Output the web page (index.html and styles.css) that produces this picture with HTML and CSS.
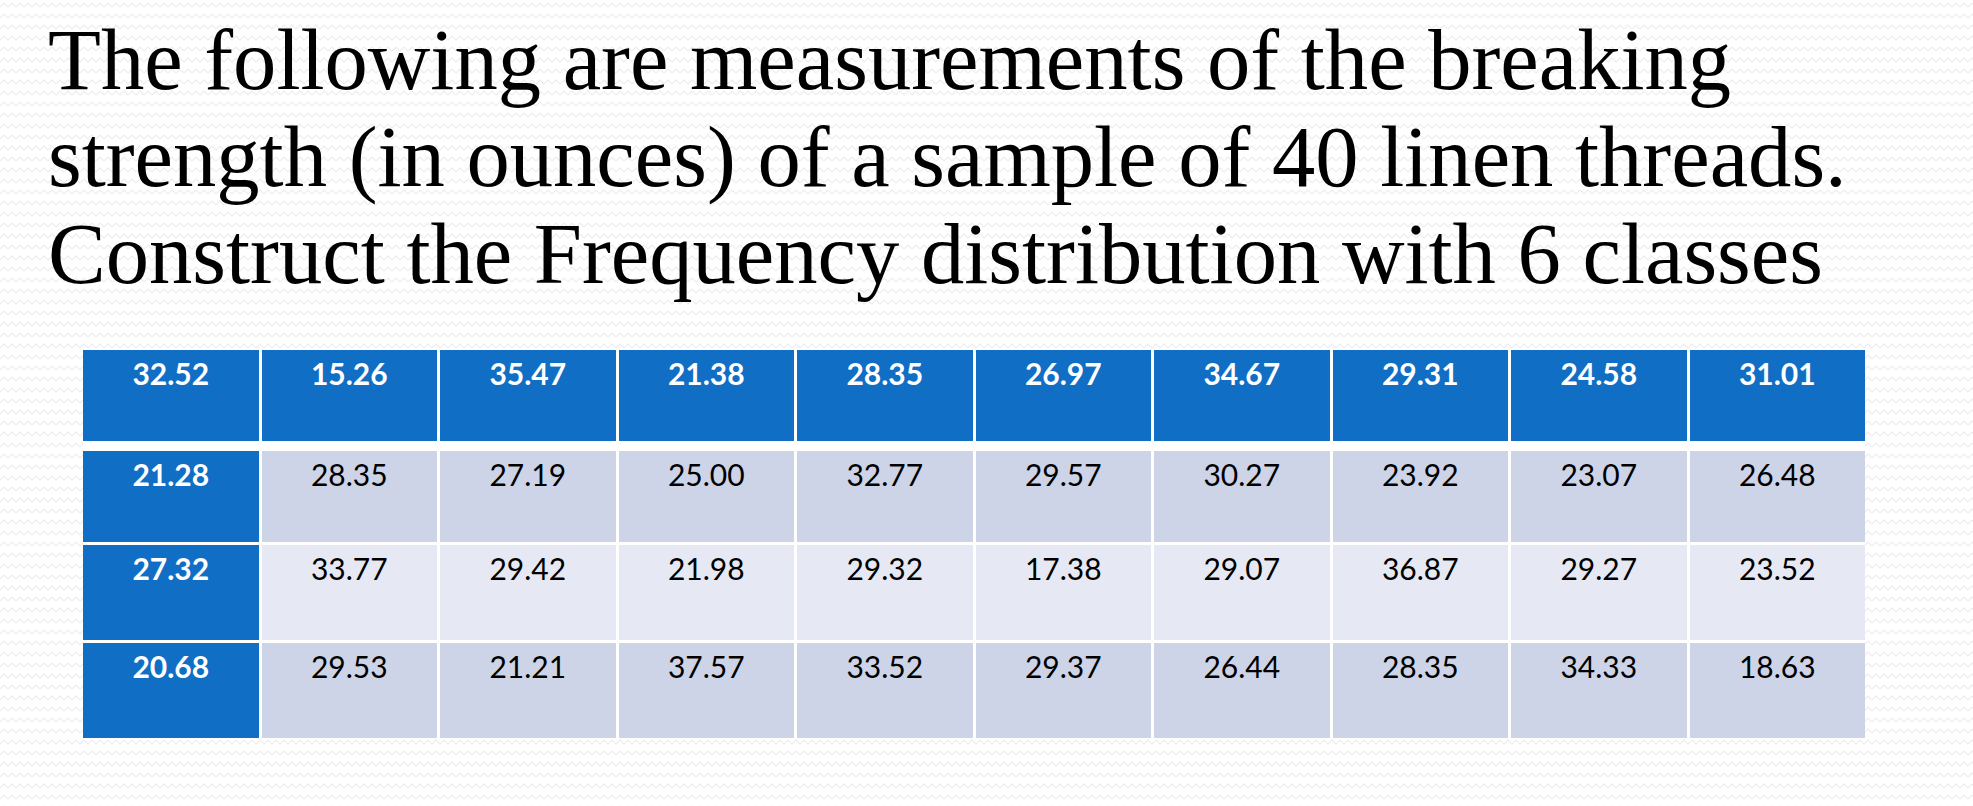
FILE: index.html
```html
<!DOCTYPE html>
<html lang="en">
<head>
<meta charset="utf-8">
<title>Breaking strength of linen threads</title>
<link rel="stylesheet" href="styles.css">
</head>
<body>
<main class="slide">
  <h1 class="title">The following are measurements of the breaking<br>strength (in ounces) of a sample of 40 linen threads.<br>Construct the Frequency distribution with 6 classes</h1>
  <div class="table">
    <div class="row head">
      <div class="cell key">32.52</div>
      <div class="cell key">15.26</div>
      <div class="cell key">35.47</div>
      <div class="cell key">21.38</div>
      <div class="cell key">28.35</div>
      <div class="cell key">26.97</div>
      <div class="cell key">34.67</div>
      <div class="cell key">29.31</div>
      <div class="cell key">24.58</div>
      <div class="cell key">31.01</div>
    </div>
    <div class="body">
      <div class="row band1">
        <div class="cell key">21.28</div>
        <div class="cell">28.35</div>
        <div class="cell">27.19</div>
        <div class="cell">25.00</div>
        <div class="cell">32.77</div>
        <div class="cell">29.57</div>
        <div class="cell">30.27</div>
        <div class="cell">23.92</div>
        <div class="cell">23.07</div>
        <div class="cell">26.48</div>
      </div>
      <div class="row band2 tall">
        <div class="cell key">27.32</div>
        <div class="cell">33.77</div>
        <div class="cell">29.42</div>
        <div class="cell">21.98</div>
        <div class="cell">29.32</div>
        <div class="cell">17.38</div>
        <div class="cell">29.07</div>
        <div class="cell">36.87</div>
        <div class="cell">29.27</div>
        <div class="cell">23.52</div>
      </div>
      <div class="row band1 tall">
        <div class="cell key">20.68</div>
        <div class="cell">29.53</div>
        <div class="cell">21.21</div>
        <div class="cell">37.57</div>
        <div class="cell">33.52</div>
        <div class="cell">29.37</div>
        <div class="cell">26.44</div>
        <div class="cell">28.35</div>
        <div class="cell">34.33</div>
        <div class="cell">18.63</div>
      </div>
    </div>
  </div>
</main>
</body>
</html>
```
FILE: styles.css
```css
html, body {
  margin: 0;
  padding: 0;
}

body {
  width: 1973px;
  height: 806px;
  overflow: hidden;
  background-color: #ffffff;
  background-image: url("data:image/svg+xml;utf8,<svg xmlns='http://www.w3.org/2000/svg' width='8' height='11'><path d='M0 7 L4 3 L8 7' fill='none' stroke='%23ededed' stroke-width='1.1'/></svg>");
  background-size: 8px 11px;
}

.slide {
  padding-top: 12px;
}

.title {
  margin: 0;
  padding-left: 48px;
  font-family: "Liberation Serif", "Times New Roman", serif;
  font-weight: normal;
  font-size: 86.6px;
  line-height: 97px;
  color: #000000;
  white-space: nowrap;
}

.table {
  margin-top: 47px;
  margin-left: 83px;
  width: 1782px;
  background: #ffffff;
  font-family: Lato, "Open Sans", sans-serif;
  font-size: 30px;
  line-height: 1.2;
}

.row {
  display: grid;
  grid-template-columns: repeat(10, 1fr);
  column-gap: 3px;
  height: 91px;
}

.row.head {
  margin-bottom: 10px;
}

.row.tall {
  height: 95px;
}

.body {
  display: flex;
  flex-direction: column;
  gap: 3px;
}

.cell {
  padding-top: 5px;
  text-align: center;
  color: #000000;
}

.band1 .cell {
  background: #cdd4e8;
}

.band2 .cell {
  background: #e6e9f4;
}

.row .cell.key {
  background: #106ec5;
  color: #ffffff;
  font-weight: bold;
}
```
